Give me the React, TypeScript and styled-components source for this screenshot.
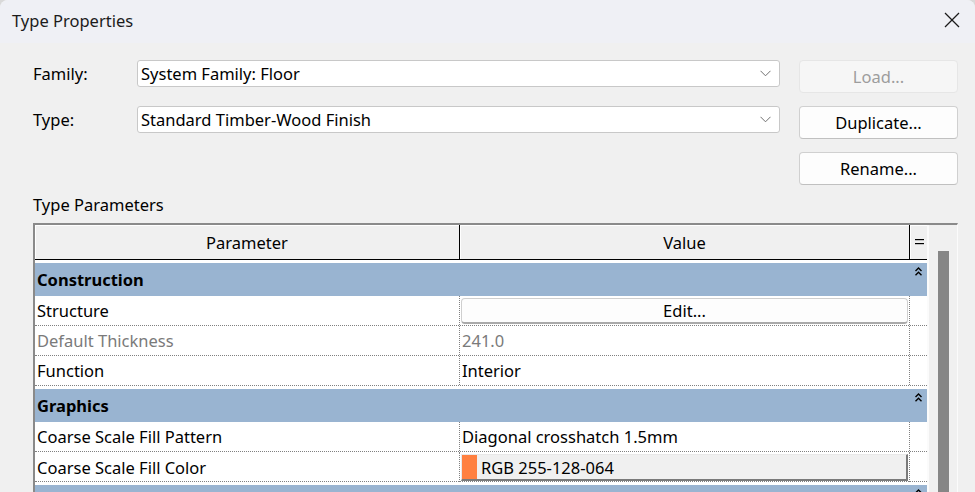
import React from "react";
import styled, { createGlobalStyle } from "styled-components";

const Global = createGlobalStyle`
  html, body { margin: 0; padding: 0; background: #d9d9d9; }
  body { font-family: "Noto Sans", "Open Sans", sans-serif; -webkit-font-smoothing: antialiased; }
  * { box-sizing: border-box; }
`;

const Window = styled.div`
  width: 975px;
  height: 492px;
  overflow: hidden;
  background: #f0f0f0;
  border-radius: 8px 8px 0 0;
  display: flex;
  flex-direction: column;
  font-size: 16.5px;
  color: #000;
`;

const TitleBar = styled.div`
  height: 43px;
  flex: none;
  background: #eff0f5;
  display: flex;
  align-items: center;
  justify-content: space-between;
  padding: 0 15px 3px 12px;
`;

const Title = styled.div`
  font-size: 16.5px;
  color: #1b1b1b;
`;

const Body = styled.div`
  flex: 1;
  min-height: 0;
  display: flex;
  flex-direction: column;
  padding: 17px 0 0 33px;
`;

const Form = styled.div`
  display: grid;
  grid-template-columns: 104px 643px 178px;
  grid-auto-rows: 33px;
  row-gap: 13px;
`;

const FieldLabel = styled.div`
  line-height: 27px;
  height: 27px;
`;

const Combo = styled.div`
  height: 27px;
  background: #fff;
  border: 1px solid #c8c8c8;
  border-radius: 3px;
  display: flex;
  align-items: center;
  justify-content: space-between;
  padding: 0 8px 0 3px;
`;

const ActionButton = styled.div<{ $disabled?: boolean; $row?: number }>`
  grid-column: 3;
  grid-row: ${(p) => p.$row};
  justify-self: end;
  width: 159px;
  height: 33px;
  border: 1px solid ${(p) => (p.$disabled ? "#e6e6e6" : "#d0d0d0")};
  border-bottom-color: ${(p) => (p.$disabled ? "#e6e6e6" : "#c0c0c0")};
  background: ${(p) => (p.$disabled ? "#f6f6f6" : "#fdfdfd")};
  color: ${(p) => (p.$disabled ? "#9d9d9d" : "#000")};
  border-radius: 4px;
  display: flex;
  align-items: center;
  justify-content: center;
`;

const SectionLabel = styled.div`
  margin-top: 9px;
  line-height: 22px;
  height: 22px;
`;

const Table = styled.div`
  margin-top: 7px;
  width: 925px;
  flex: 1;
  min-height: 0;
  display: grid;
  grid-template-columns: 892px 30px;
  border-top: 2px solid #8a8a8a;
  border-left: 2px solid #8a8a8a;
  border-right: 1px solid #fbfbfb;
  overflow: hidden;
`;

const Grid = styled.div`
  display: flex;
  flex-direction: column;
  background: #fff;
`;

const cols = "425px 450px 17px";

const HeaderRow = styled.div`
  display: grid;
  grid-template-columns: ${cols};
  height: 35px;
  border-bottom: 1px solid #000;
  background: #f0f0f0;
  flex: none;
`;

const HeaderCell = styled.div<{ $last?: boolean }>`
  display: flex;
  align-items: center;
  justify-content: center;
  border-right: ${(p) => (p.$last ? "none" : "1px solid #000")};
  box-shadow: inset 1px 1px #ffffff;
`;

const GroupRow = styled.div`
  padding-top: 3px;
  background: #fff;
  flex: none;
`;

const GroupBand = styled.div`
  height: 33px;
  background: #99b4d1;
  display: grid;
  grid-template-columns: 875px 17px;
`;

const GroupTitle = styled.div`
  font-weight: 700;
  padding-left: 2px;
  display: flex;
  align-items: center;
`;

const GroupToggle = styled.div`
  display: flex;
  justify-content: center;
  padding-top: 4px;
`;

const DataRow = styled.div`
  display: grid;
  grid-template-columns: ${cols};
  height: 30px;
  border-bottom: 1px dotted #808080;
  flex: none;
`;

const Cell = styled.div<{ $muted?: boolean; $divider?: boolean }>`
  display: flex;
  align-items: center;
  padding-left: 2px;
  color: ${(p) => (p.$muted ? "#7a7a7a" : "#000")};
  border-right: ${(p) => (p.$divider ? "1px dotted #808080" : "none")};
  min-width: 0;
  white-space: nowrap;
`;

const ButtonCell = styled.div`
  padding: 2px 1px 1px 1px;
  border-right: 1px dotted #808080;
  display: flex;
`;

const EditButton = styled.div`
  flex: 1;
  background: #fdfdfd;
  border: 1px solid #cfcfcf;
  border-bottom: 2px solid #a9a9a9;
  border-radius: 4px;
  display: flex;
  align-items: center;
  justify-content: center;
`;

const ColorButton = styled.div`
  flex: 1;
  background: #f0f0f0;
  border-top: 1px solid #e8e8e8;
  border-left: 1px solid #e8e8e8;
  border-right: 2px solid #7a7a7a;
  border-bottom: 2px solid #7a7a7a;
  display: flex;
  align-items: center;
  gap: 4px;
`;

const Swatch = styled.div<{ $color: string }>`
  width: 15px;
  height: 24px;
  background: ${(p) => p.$color};
`;

const Track = styled.div`
  background: #f0f0f0;
  border-left: 2px solid #fbfbfb;
  padding: 26px 0 0 9px;
`;

const Thumb = styled.div`
  width: 11px;
  height: 400px;
  background: #868686;
`;

const Chevron = () => (
  <svg width="11" height="7" viewBox="0 0 11 7">
    <polyline points="0.5,0.8 5.5,5.8 10.5,0.8" fill="none" stroke="#707070" strokeWidth="1" />
  </svg>
);

const CloseIcon = () => (
  <svg width="16" height="16" viewBox="0 0 16 16">
    <line x1="1" y1="1" x2="15" y2="15" stroke="#1b1b1b" strokeWidth="1.2" />
    <line x1="15" y1="1" x2="1" y2="15" stroke="#1b1b1b" strokeWidth="1.2" />
  </svg>
);

const Collapse = () => (
  <svg width="7" height="9" viewBox="0 0 7 9">
    <polyline points="0.5,4 3.5,1 6.5,4" fill="none" stroke="#000" strokeWidth="1.4" />
    <polyline points="0.5,8.3 3.5,5.3 6.5,8.3" fill="none" stroke="#000" strokeWidth="1.4" />
  </svg>
);

const EqualsIcon = () => (
  <svg width="9" height="6" viewBox="0 0 9 6" style={{ marginLeft: 2 }}>
    <rect x="0" y="0" width="9" height="1.2" fill="#000" />
    <rect x="0" y="4" width="9" height="1.2" fill="#000" />
  </svg>
);

type Row =
  | { kind: "group"; title: string }
  | { kind: "text"; param: string; value: string; muted?: boolean }
  | { kind: "button"; param: string; value: string }
  | { kind: "color"; param: string; value: string; color: string };

const rows: Row[] = [
  { kind: "group", title: "Construction" },
  { kind: "button", param: "Structure", value: "Edit..." },
  { kind: "text", param: "Default Thickness", value: "241.0", muted: true },
  { kind: "text", param: "Function", value: "Interior" },
  { kind: "group", title: "Graphics" },
  { kind: "text", param: "Coarse Scale Fill Pattern", value: "Diagonal crosshatch 1.5mm" },
  { kind: "color", param: "Coarse Scale Fill Color", value: "RGB 255-128-064", color: "#ff8040" },
  { kind: "group", title: "" },
];

export default function App() {
  return (
    <>
      <Global />
      <Window>
        <TitleBar>
          <Title>Type Properties</Title>
          <CloseIcon />
        </TitleBar>
        <Body>
          <Form>
            <FieldLabel>Family:</FieldLabel>
            <Combo>
              <span>System Family: Floor</span>
              <Chevron />
            </Combo>
            <ActionButton $disabled $row={1}>Load...</ActionButton>
            <FieldLabel>Type:</FieldLabel>
            <Combo>
              <span>Standard Timber-Wood Finish</span>
              <Chevron />
            </Combo>
            <ActionButton $row={2}>Duplicate...</ActionButton>
            <ActionButton $row={3}>Rename...</ActionButton>
          </Form>
          <SectionLabel>Type Parameters</SectionLabel>
          <Table>
            <Grid>
              <HeaderRow>
                <HeaderCell>Parameter</HeaderCell>
                <HeaderCell>Value</HeaderCell>
                <HeaderCell $last>
                  <EqualsIcon />
                </HeaderCell>
              </HeaderRow>
              {rows.map((r, i) => {
                if (r.kind === "group") {
                  return (
                    <GroupRow key={i}>
                      <GroupBand>
                        <GroupTitle>{r.title}</GroupTitle>
                        <GroupToggle>
                          <Collapse />
                        </GroupToggle>
                      </GroupBand>
                    </GroupRow>
                  );
                }
                return (
                  <DataRow key={i}>
                    <Cell $divider $muted={r.kind === "text" && r.muted}>
                      {r.param}
                    </Cell>
                    {r.kind === "text" && (
                      <Cell $divider $muted={r.muted}>
                        {r.value}
                      </Cell>
                    )}
                    {r.kind === "button" && (
                      <ButtonCell>
                        <EditButton>{r.value}</EditButton>
                      </ButtonCell>
                    )}
                    {r.kind === "color" && (
                      <ButtonCell>
                        <ColorButton>
                          <Swatch $color={r.color} />
                          <span>{r.value}</span>
                        </ColorButton>
                      </ButtonCell>
                    )}
                    <Cell />
                  </DataRow>
                );
              })}
            </Grid>
            <Track>
              <Thumb />
            </Track>
          </Table>
        </Body>
      </Window>
    </>
  );
}
